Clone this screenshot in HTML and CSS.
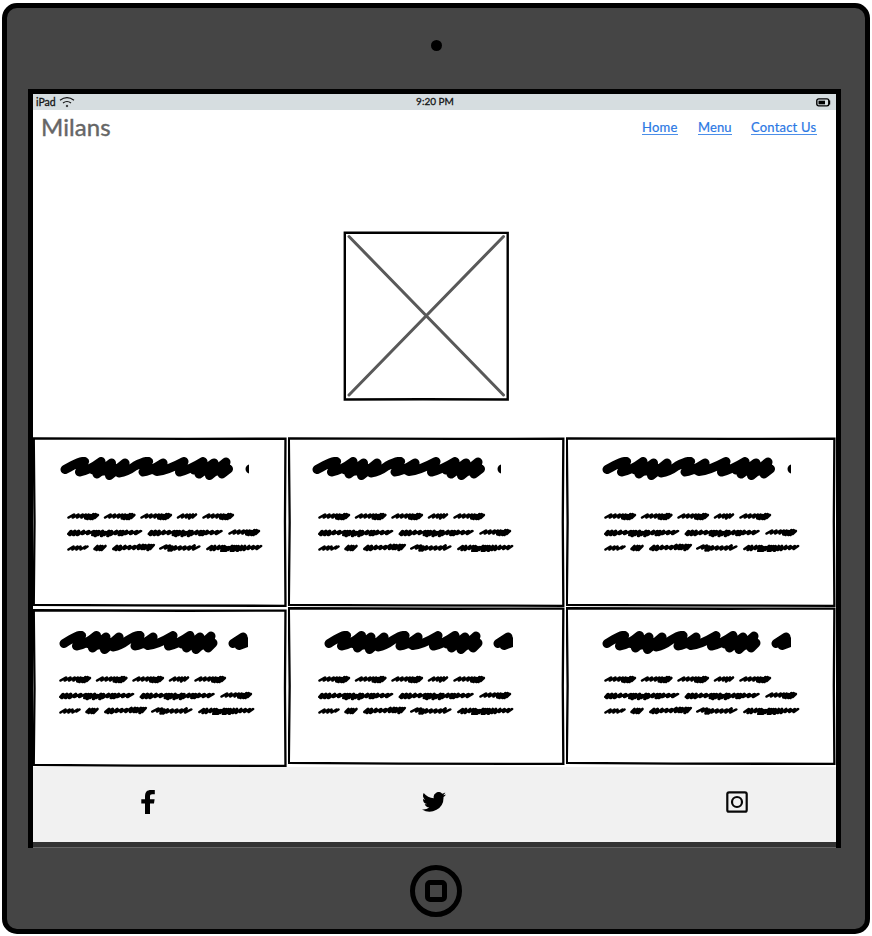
FILE: index.html
```html
<!DOCTYPE html>
<html lang="en">
<head>
<meta charset="utf-8">
<title>Milans</title>
<link rel="stylesheet" href="styles.css">
</head>
<body>
<svg class="defs" aria-hidden="true">
  <symbol id="head-long" viewBox="0 0 189 26">
    <path class="marker" d="M5 12.500 Q22 3 24.500 4.500 L19.500 15 Q29 13.500 41 4.500 L37 17 51.500 6 49.500 18.500 65 6 59 16 Q67 15 75 9 Q86 3 88.500 4.500 L83 15 Q89 15 103 6 L97 14.500 Q106 14 124 4.500 L119.500 15 Q129 13 143 4.500 L139 17 154 6 149.500 18.500 166 5 162 17 168.500 12 M190 12 h4"/>
    <path class="marker" d="M40 10 L60 12 M43 14 L56 14 M142 10 L166 12 M146 14 L162 14 M33 13 L38 10 M94 13 L97 11 M134 13 L138 10"/>
  </symbol>
  <symbol id="head-short" viewBox="0 0 189 26">
    <path class="marker" d="M5 12.500 Q20 3 22.500 4.500 L17.500 15 Q27 13.500 37.500 4.500 L33.500 17 47 6 45.500 18.500 60 6 54 16 Q61 15 69 9 Q79 3 81 4.500 L76 15 Q82 15 94 6 L89 14.500 Q98 14 114 4.500 L109.500 15 Q119 13 131 4.500 L127.500 17 141 6 137 18.500 152 5 149 17 154 12 M174 12.500 L184 6 180 14.500 192 10"/>
    <path class="marker" d="M37 10 L55 12 M40 14 L52 14 M130 10 L152 12 M134 14 L149 14 M30 13 L35 10 M86 13 L89 11 M123 13 L127 10 M177 11 L184 12"/>
  </symbol>
  <symbol id="copy" viewBox="0 0 200 40">
    <g class="pen">
      <path id="w" transform="scale(1.080 1)" d="M1.500 5.500 l5-3-1 3 5-3-1 3 5-3-1 3 4-3-.500 4 3-4-1 4.500 3-4-.500 4 3-5-1 5 3-5-1 4 3-3"/>
      <use href="#w" x="36.500"/><use href="#w" x="73"/><use href="#w" x="135"/>
      <path d="M111 5.500 l5-3-1 3 5-3-1 3 4-3-1 4 4-4-.500 3 3.500-3"/>
      <path id="l" transform="translate(-.3 0) scale(1.265 1)" d="M1.500 22 l2-3-1 4 4-4-1 4 4-4-1 4 5-4-1 3 5-3-1 3 5-3-1 4 3-4-1 5 3-5-1 4 4-4-1 5 3-4-1 3 4-4-1 5 3-5-1 4 5-4-1 3 4-3-1 4 3-4-1 4 4-4-1 3 5-3-1 3 5-3-1 3 4-3"/>
      <use href="#l" x="80.500"/><use href="#w" x="161" y="16"/>
      <path d="M1.500 37.500 l5-3-1 3 5-3-1 3 4-3 0 3 5-3-1 2 3-2"/>
      <path d="M27.500 37 l3-3-1 4 4-4-1 4 3-4-1 4 4-4"/>
      <path transform="translate(46.500 37) scale(1.180 1)" d="M0 0 l3-3-1 4 4-4-1 4 5-4-1 3 5-3-1 3 5-3-1 3 5-4-1 4 4-4-1 4 3-4-1 4 4-4-1 5 3-5-1 4 3-4"/>
      <path transform="translate(93.500 36.500) scale(1.170 1)" d="M0 0 l5-3-1 3 4-3-1 5 3-4-1 4 4-4-1 3 5-3-1 3 5-3-1 3 5-3-1 3 5-4-1 4 5-3"/>
      <path transform="translate(140.500 37) scale(1.070 1)" d="M0 0 l4-3-1 4 4-4-1 4 5-4-1 3 4-3-1 5 3-5-1 5 3-4-1 4 3-4-1 3 4-4-1 5 3-5-1 5 3-5-1 4 3-4-1 5 4-5-1 4 4-4-1 4 5-4-1 3 5-3-1 3 5-3-1 3 4-3"/>
    </g>
  </symbol>
  <symbol id="frame" viewBox="0 0 100 100" preserveAspectRatio="none">
    <path d="M.3 .8 L60 1.100 99.400 1 99.200 50 99.400 99.300 40 99.100 .3 98.700 .6 50z"/>
  </symbol>
</svg>
<div class="tablet">
  <div class="camera"></div>
  <main class="screen">
    <div class="status">
      <span class="carrier">iPad
        <svg width="16" height="12" viewBox="0 0 16 12" fill="none" stroke="#111" stroke-width="1.200"><path d="M1 4.200 Q8 -1 15 4.200M4 7 Q8 4 12 7"/><circle cx="8" cy="10" r=".8" fill="#111" stroke-width=".6"/></svg>
      </span>
      <span class="clock">9:20 PM</span>
      <svg class="battery" width="15" height="9" viewBox="0 0 15 9"><rect x=".8" y=".9" width="12" height="7" rx="1.800" fill="none" stroke="#000" stroke-width="1.400"/><path d="M2.500 2.700h6.500v3.600h-6.500z"/><path d="M13.500 2.500v4" stroke="#000" stroke-width="1.400"/></svg>
    </div>
    <header class="header">
      <h1 class="logo">Milans</h1>
      <nav class="nav"><a class="home" href="#">Home</a><a class="menu" href="#">Menu</a><a class="contact" href="#">Contact Us</a></nav>
    </header>
    <section class="hero">
      <svg width="166" height="170" viewBox="0 0 166 170" fill="none"><path d="M6 5.500 160.500 164M160.500 5.500 6 164" stroke="#595959" stroke-width="3" stroke-linecap="round"/><path d="M1.800 1.600 80 1.800 164.700 1.900V168.500L80 168.300 1.800 168.500z" stroke="#000" stroke-width="2.400"/></svg>
    </section>
    <section class="cards">
      <article class="card a"><svg class="edge"><use href="#frame"/></svg><svg class="title"><use href="#head-long"/></svg><svg class="copy"><use href="#copy"/></svg></article>
      <article class="card b"><svg class="edge"><use href="#frame"/></svg><svg class="title"><use href="#head-long"/></svg><svg class="copy"><use href="#copy"/></svg></article>
      <article class="card c"><svg class="edge"><use href="#frame"/></svg><svg class="title"><use href="#head-long"/></svg><svg class="copy"><use href="#copy"/></svg></article>
      <article class="card d"><svg class="edge"><use href="#frame"/></svg><svg class="title"><use href="#head-short"/></svg><svg class="copy"><use href="#copy"/></svg></article>
      <article class="card e"><svg class="edge"><use href="#frame"/></svg><svg class="title"><use href="#head-short"/></svg><svg class="copy"><use href="#copy"/></svg></article>
      <article class="card f"><svg class="edge"><use href="#frame"/></svg><svg class="title"><use href="#head-short"/></svg><svg class="copy"><use href="#copy"/></svg></article>
    </section>
    <footer class="footer">
      <svg class="facebook" width="14" height="24" viewBox="0 0 14 24"><path d="M4 24V13.500H.300V9.200H4V6.500C4 2 6 0 10 0h3.800v4.200h-2.600C9.500 4.200 9 5 9 6.500v2.700h4.600l-.6 4.300H9V24z"/></svg>
      <svg class="twitter" width="24" height="20" viewBox="0 0 24 20"><path d="M24 2.400a9.800 9.800 0 0 1-2.800.8A4.900 4.900 0 0 0 23.300.5a9.900 9.900 0 0 1-3.100 1.200 4.900 4.900 0 0 0-8.400 4.500A14 14 0 0 1 1.700 1.100a4.900 4.900 0 0 0 1.500 6.600 4.900 4.900 0 0 1-2.200-.6 4.900 4.900 0 0 0 3.900 4.900 4.900 4.900 0 0 1-2.200.1 4.900 4.900 0 0 0 4.600 3.400A9.900 9.900 0 0 1 0 17.500 14 14 0 0 0 21.500 5a10 10 0 0 0 2.500-2.600z"/></svg>
      <svg class="instagram" width="22" height="22" viewBox="0 0 22 22" fill="none" stroke="#080808" stroke-width="2.200"><rect x="1.300" y="1.300" width="19.400" height="19.400" rx="1.800"/><circle cx="11" cy="11" r="5"/></svg>
    </footer>
  </main>
  <div class="home-button"><div class="home-square"></div></div>
</div>
</body>
</html>
```

FILE: styles.css
```css
* { box-sizing: border-box; }
body { margin: 0; padding: 3px 2px 2px; background: #fff; font-family: Lato, "Open Sans", sans-serif; }
svg { display: block; flex: none; }
.defs { width: 0; height: 0; position: absolute; }
.marker { fill: none; stroke: #000; stroke-width: 9; stroke-linecap: round; stroke-linejoin: round; }
.pen { fill: none; stroke: #000; stroke-width: 2.6; stroke-linecap: round; stroke-linejoin: round; }
.tablet { width: 868px; height: 931px; border: 5px solid #000; border-radius: 15px; background: #454545; display: flex; flex-direction: column; }
.camera { width: 11px; height: 11px; margin: 32px 0 0 423.5px; border-radius: 50%; background: #000; }
.screen { width: 813px; height: 759px; margin: 38px 0 0 21px; border: solid #000; border-width: 5px 5px 0; background: linear-gradient(#333 0 0) 0 748px / 100% 5px no-repeat, linear-gradient(#666 0 0) 0 753px / 100% 1px no-repeat, #fff; display: flex; flex-direction: column; }
.status { height: 16px; background: #d6dde0; display: grid; grid-template-columns: 1fr auto 1fr; align-items: center; padding: 0 5px 0 3px; font-size: 10.5px; line-height: 14px; font-weight: 400; -webkit-text-stroke: .3px #151515; color: #151515; }
.carrier { display: flex; gap: 3px; align-items: center; height: 14px; }
.clock { padding-left: 3px; height: 16px; font-size: 10px; }
.battery { justify-self: end; }
.header { height: 51px; padding: 2px 19px 0 8px; display: flex; justify-content: space-between; color: #666; }
.logo { margin: 0; font-size: 24px; line-height: 30px; font-weight: 400; -webkit-text-stroke: .4px #666; letter-spacing: .1px; }
.nav { display: flex; gap: 20px; padding-top: 7px; }
.nav a { height: 16px; font-size: 13px; line-height: 17px; color: #2b78e4; text-decoration: none; border-bottom: 1px solid #4b8ee9; white-space: nowrap; -webkit-text-stroke: .2px #2b78e4; }
.nav .home { width: 36px; letter-spacing: .2px; }
.nav .menu { width: 34px; letter-spacing: .1px; margin-right: -1px; }
.nav .contact { width: 66px; letter-spacing: .2px; }
.hero { height: 276px; padding: 70px 0 0 310px; }
.cards { height: 329px; display: grid; grid-template-columns: 254px 277px 270px; grid-template-rows: 170px 158px; column-gap: 1px; }
.card { position: relative; display: flex; flex-direction: column; }
.edge { position: absolute; inset: 0; width: 100%; height: 100%; overflow: visible; fill: none; stroke: #000; stroke-width: 2.3; }
.edge use, #frame path { vector-effect: non-scaling-stroke; }
.title { width: 189px; height: 26px; }
.copy { width: 200px; height: 40px; }
.a { padding: 20px 0 0 27px; }
.a .copy { margin: 29px 0 0 7px; }
.b { padding: 20px 0 0 24px; }
.b .copy { margin: 29px 0 0 6px; }
.c { padding: 20px 0 0 36px; }
.c .copy { margin: 29px 0 0 2px; }
.d { margin-top: 2px; padding: 22px 0 0 26px; }
.e { padding: 24px 0 0 36px; }
.f { padding: 24px 0 0 36px; }
.d .copy, .e .copy, .f .copy { margin-top: 18px; }
.d { height: 158px; }
.e .copy { margin-left: -6px; }
.f .copy { margin-left: 2px; }
.footer { height: 76px; background: linear-gradient(#f1f1f1 0 0) 0 1px no-repeat; display: flex; padding: 24px 0 0 108px; }
.twitter { margin: 2px 0 0 267px; }
.instagram { margin: 1px 0 0 280px; }
.home-button { width: 52px; height: 52px; margin: 17px 0 0 403px; border: 5px solid #000; border-radius: 50%; display: grid; place-items: center; }
.home-square { width: 22px; height: 22px; border: 5px solid #000; border-radius: 5px; }
```
